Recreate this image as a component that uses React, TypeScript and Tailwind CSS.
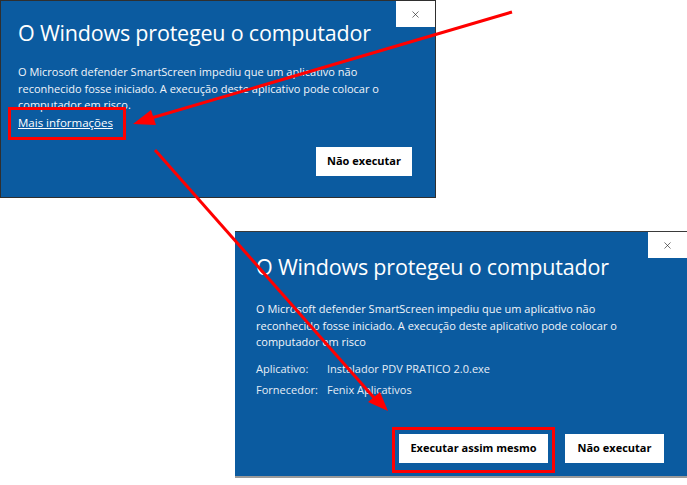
import { X } from 'lucide-react'

const font = { fontFamily: '"Open Sans", "Noto Sans", sans-serif' }

function CloseBox() {
  return (
    <div className="absolute top-0 right-0 w-[39px] h-[26px] bg-white flex items-center justify-center">
      <X className="w-[11px] h-[11px] text-[#222]" strokeWidth={1.4} />
    </div>
  )
}

export default function App() {
  return (
    <div className="relative w-[687px] h-[485px] bg-white overflow-hidden text-white" style={font}>
      {/* first window */}
      <div className="absolute left-0 top-0 w-[436px] h-[198px] bg-[#0b5ba0] border border-[#2f2f2f]">
        <CloseBox />
        <div className="flex flex-col pl-[17px] pt-[18px]">
          <h1 className="text-[21.5px] leading-[28px] tracking-[-0.2px]">O Windows protegeu o computador</h1>
          <p className="mt-[17px] text-[11px] leading-[16.5px] w-[380px] text-[#f2f5fa]">
            O Microsoft defender SmartScreen impediu que um aplicativo não reconhecido fosse iniciado. A execução deste aplicativo pode colocar o computador em risco.
          </p>
          <span className="mt-[1px] text-[11.5px] leading-[16px] underline">Mais informações</span>
          <div className="flex justify-end pr-[23px] mt-[16px]">
            <button className="w-[96px] h-[29px] bg-white text-black text-[11px] font-bold">Não executar</button>
          </div>
        </div>
      </div>

      {/* second window */}
      <div className="absolute left-[235px] top-[231px] w-[452px] h-[247px] bg-[#0b5ba0] border-t border-[#3a3a3a] border-b-2 border-b-[#9a9a9a]">
        <CloseBox />
        <div className="flex flex-col pl-[21px] pt-[21px]">
          <h1 className="text-[21.5px] leading-[28px] tracking-[-0.2px]">O Windows protegeu o computador</h1>
          <p className="mt-[20px] text-[11px] leading-[16.5px] w-[390px] text-[#f2f5fa]">
            O Microsoft defender SmartScreen impediu que um aplicativo não reconhecido fosse iniciado. A execução deste aplicativo pode colocar o computador em risco
          </p>
          <div className="mt-[9px] grid grid-cols-[71px_1fr] gap-y-[4px] text-[11px] leading-[17px] text-[#e6edf6]">
            <span>Aplicativo:</span>
            <span>Instalador PDV PRATICO 2.0.exe</span>
            <span>Fornecedor:</span>
            <span>Fenix Aplicativos</span>
          </div>
          <div className="flex justify-end gap-[17px] pr-[23px] mt-[36px]">
            <button className="w-[149px] h-[29px] bg-white text-black text-[11px] font-bold">Executar assim mesmo</button>
            <button className="w-[99px] h-[29px] bg-white text-black text-[11px] font-bold">Não executar</button>
          </div>
        </div>
      </div>

      {/* red highlight boxes */}
      <div className="absolute left-[8px] top-[107px] w-[118px] h-[33px] border-[3px] border-[#ff0000]" />
      <div className="absolute left-[392px] top-[427px] w-[163px] h-[46px] border-[3px] border-[#ff0000]" />

      {/* arrows */}
      <svg className="absolute inset-0 pointer-events-none" width="687" height="485">
        <line x1="512" y1="12" x2="148" y2="119" stroke="#ff0000" strokeWidth="3" />
        <polygon points="133,124 151,110 156,125" fill="#ff0000" />
        <line x1="155" y1="150" x2="376" y2="400" stroke="#ff0000" strokeWidth="3" />
        <polygon points="388,411 368,402 380,392" fill="#ff0000" />
      </svg>
    </div>
  )
}
